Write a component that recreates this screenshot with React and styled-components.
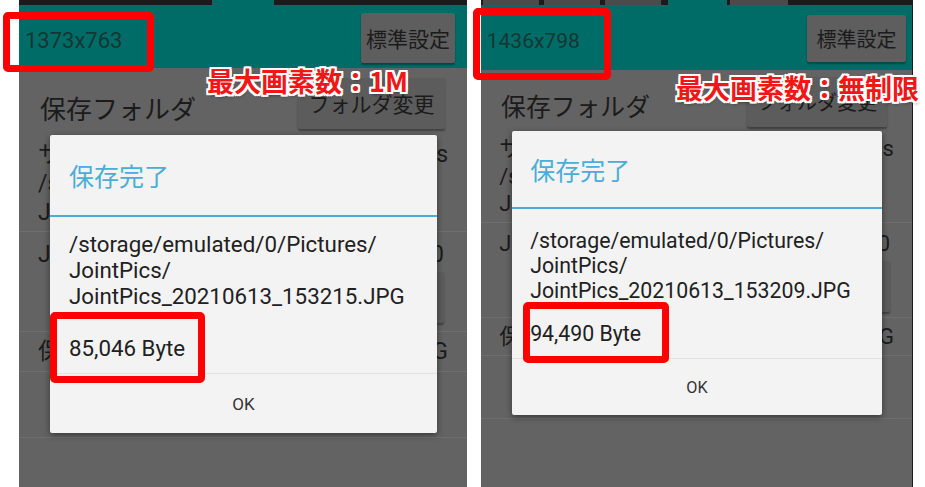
import React from 'react';
import styled, { createGlobalStyle, ThemeProvider } from 'styled-components';

// scale helper: right screenshot is captured a little smaller than the left one
const u = (n) => ({ theme }) => `${(n * theme.k).toFixed(2)}px`;

const PANELS = [
  {
    k: 1,
    w: 448,
    edge: false,
    headH: 63,
    folderH: 70,
    tools: [
      { w: 193, pad: 0, keys: [] },
      { w: 193, pad: 0, keys: [] },
    ],
    std: { w: 94, h: 50, right: 12 },
    folderBtn: { w: 147, h: 51, right: 22 },
    size: '1373x763',
    dialog: { top: 135, left: 31, w: 387, h: 298 },
    msgTop: 14,
    blank: 26,
    file: 'JointPics_20210613_153215.JPG',
    bytes: '85,046 Byte',
  },
  {
    k: 0.955,
    w: 432,
    edge: true,
    headH: 65,
    folderH: 63,
    tools: [
      { w: 187, pad: 2, keys: [56, 56, 56] },
      { w: 185, pad: 3, keys: [58] },
    ],
    std: { w: 99, h: 47, right: 6 },
    folderBtn: { w: 140, h: 50, right: 25 },
    size: '1436x798',
    dialog: { top: 131, left: 31, w: 370, h: 284 },
    msgTop: 20,
    blank: 18,
    file: 'JointPics_20210613_153209.JPG',
    bytes: '94,490 Byte',
  },
];

const MARKS = [
  { x: 3, y: 12, w: 151, h: 60 },
  { x: 50, y: 312, w: 155, h: 71 },
  { x: 473, y: 8, w: 138, h: 72 },
  { x: 523, y: 302, w: 146, h: 61 },
];

const NOTES = [
  { x: 207, y: 64, text: '最大画素数：1M' },
  { x: 676, y: 71, text: '最大画素数：無制限' },
];

export default function App() {
  return (
    <>
      <GlobalStyle />
      <Stage>
        {PANELS.map((p) => (
          <ThemeProvider theme={p} key={p.size}>
            <Phone p={p} />
          </ThemeProvider>
        ))}
        {MARKS.map((m, i) => (
          <RedBox key={i} $x={m.x} $y={m.y} $w={m.w} $h={m.h} />
        ))}
        {NOTES.map((n) => (
          <RedNote key={n.text} $x={n.x} $y={n.y}>
            {n.text}
          </RedNote>
        ))}
      </Stage>
    </>
  );
}

function Phone({ p }) {
  return (
    <Screen $w={p.w} $edge={p.edge}>
      <Toolbar>
        {p.tools.map((t, i) => (
          <ToolGroup key={i} $w={t.w} $pad={t.pad}>
            {t.keys.map((kw, j) => (
              <ToolKey key={j} $w={kw} />
            ))}
          </ToolGroup>
        ))}
      </Toolbar>

      <Header $h={p.headH} $right={p.std.right}>
        <SizeLabel>{p.size}</SizeLabel>
        <StdButton $w={p.std.w} $h={p.std.h}>標準設定</StdButton>
      </Header>

      <FolderRow $h={p.folderH} $right={p.folderBtn.right}>
        <FolderLabel>保存フォルダ</FolderLabel>
        <GrayButton $w={p.folderBtn.w} $h={p.folderBtn.h}>
          フォルダ変更
        </GrayButton>
      </FolderRow>

      <InfoRow>
        <Line>
          <span>サブフォルダ</span>
          <span>JointPics</span>
        </Line>
        <Line>/storage/emulated/0/Pictures/</Line>
        <Line>JointPics</Line>
      </InfoRow>

      <QualityRow>
        <Line>
          <span>JPEG品質</span>
          <span>100</span>
        </Line>
        <GrayButton $w={120} $h={51} $right>
          変更
        </GrayButton>
      </QualityRow>

      <FormatRow>
        <Line>
          <span>保存形式</span>
          <span>JPG</span>
        </Line>
      </FormatRow>

      <EmptyRow />

      <Dialog $top={p.dialog.top} $left={p.dialog.left} $w={p.dialog.w} $h={p.dialog.h}>
        <DialogTitle>保存完了</DialogTitle>
        <TitleRule />
        <Message $top={p.msgTop}>
          <MsgLine>/storage/emulated/0/Pictures/</MsgLine>
          <MsgLine>JointPics/</MsgLine>
          <MsgLine>{p.file}</MsgLine>
          <BlankLine $h={p.blank} />
          <MsgLine>{p.bytes}</MsgLine>
        </Message>
        <Actions>
          <OkButton>OK</OkButton>
        </Actions>
      </Dialog>
    </Screen>
  );
}

const GlobalStyle = createGlobalStyle`
  html, body {
    margin: 0;
    padding: 0;
    background: #fff;
  }
  body {
    font-family: Roboto, "Noto Sans CJK JP", sans-serif;
  }
`;

const Stage = styled.div`
  position: relative;
  width: 925px;
  height: 487px;
  overflow: hidden;
  box-sizing: border-box;
  padding-left: 19px;
  display: flex;
  gap: 14px;
  background: #fff;
`;

const Screen = styled.div`
  position: relative;
  flex-shrink: 0;
  width: ${(p) => p.$w}px;
  height: 487px;
  box-sizing: border-box;
  background: #636363;
  border-right: ${(p) => (p.$edge ? '1px solid #1c1c1c' : 'none')};
  overflow: hidden;
  color: #1b1b1b;
`;

const Toolbar = styled.div`
  display: flex;
  justify-content: space-between;
  height: 5px;
  background: #006c67;
`;

const ToolGroup = styled.div`
  width: ${(p) => p.$w}px;
  box-sizing: border-box;
  padding: 0 ${(p) => p.$pad}px;
  display: flex;
  gap: 5px;
  background: #1b1b1b;
`;

const ToolKey = styled.div`
  width: ${(p) => p.$w}px;
  background: #4b4b4b;
`;

const Header = styled.div`
  height: ${(p) => p.$h}px;
  box-sizing: border-box;
  padding: 0 ${(p) => p.$right}px 0 ${u(6)};
  display: flex;
  align-items: center;
  justify-content: space-between;
  background: #006c67;
`;

const SizeLabel = styled.div`
  font-size: ${u(22)};
  padding-top: ${u(8)};
  color: #143734;
`;

const GrayButton = styled.div`
  width: ${(p) => p.$w}px;
  height: ${(p) => p.$h}px;
  display: flex;
  align-items: center;
  justify-content: center;
  align-self: ${(p) => (p.$right ? 'flex-end' : 'auto')};
  background: #5c5c5c;
  border-radius: 2px;
  box-shadow: 0 2px 2px rgba(0, 0, 0, 0.35);
  font-size: ${u(21)};
  color: #1b1b1b;
  white-space: nowrap;
`;

const StdButton = styled(GrayButton)`
  background: #5e5e5e;
  margin-top: ${u(2)};
`;

const FolderRow = styled.div`
  height: ${(p) => p.$h}px;
  box-sizing: border-box;
  padding: 0 ${(p) => p.$right}px 0 ${u(21)};
  display: flex;
  align-items: center;
  justify-content: space-between;
`;

const FolderLabel = styled.div`
  font-size: ${u(26)};
  padding-top: ${u(8)};
`;

const Row = styled.div`
  display: flex;
  flex-direction: column;
  box-sizing: border-box;
  padding-left: ${u(19)};
  padding-right: ${u(19)};
  border-bottom: 1px solid #6e6e6e;
`;

const InfoRow = styled(Row)`
  height: ${u(94)};
  padding-top: ${u(2)};
`;

const QualityRow = styled(Row)`
  height: ${u(100)};
  padding-top: ${u(8)};
  padding-right: ${u(23)};
  gap: ${u(3)};
`;

const FormatRow = styled(Row)`
  height: ${u(40)};
  justify-content: center;
`;

const EmptyRow = styled(Row)`
  height: ${u(66)};
`;

const Line = styled.div`
  display: flex;
  justify-content: space-between;
  font-size: ${u(23)};
  line-height: ${u(29)};
  white-space: nowrap;
`;

const Dialog = styled.div`
  position: absolute;
  top: ${(p) => p.$top}px;
  left: ${(p) => p.$left}px;
  width: ${(p) => p.$w}px;
  height: ${(p) => p.$h}px;
  display: flex;
  flex-direction: column;
  background: #f4f3f3;
  border-radius: 2px;
  box-shadow: 0 2px 6px rgba(0, 0, 0, 0.45);
`;

const DialogTitle = styled.div`
  height: ${u(80)};
  display: flex;
  align-items: center;
  padding-left: ${u(19)};
  font-size: 25px;
  color: #4aaed7;
`;

const TitleRule = styled.div`
  height: 2px;
  background: #4aaed7;
`;

const Message = styled.div`
  padding: ${(p) => p.$top}px ${u(19)} ${u(12)};
  border-bottom: 1px solid #e2e1e1;
  color: #212121;
`;

const MsgLine = styled.div`
  font-size: ${u(22.3)};
  line-height: ${u(26)};
  white-space: nowrap;
`;

const BlankLine = styled.div`
  height: ${(p) => p.$h}px;
`;

const Actions = styled.div`
  flex: 1;
  display: flex;
  align-items: center;
  justify-content: center;
`;

const OkButton = styled.div`
  font-size: ${u(17)};
  color: #333;
`;

const RedBox = styled.div`
  position: absolute;
  left: ${(p) => p.$x}px;
  top: ${(p) => p.$y}px;
  width: ${(p) => p.$w}px;
  height: ${(p) => p.$h}px;
  box-sizing: border-box;
  border: 7px solid #ff0000;
  border-radius: 5px;
`;

const RedNote = styled.div`
  position: absolute;
  left: ${(p) => p.$x}px;
  top: ${(p) => p.$y}px;
  font-family: "Noto Sans CJK JP", sans-serif;
  font-weight: 700;
  font-size: 27px;
  line-height: 34px;
  color: #f21616;
  white-space: nowrap;
  text-shadow:
    2px 0 0 #fff, -2px 0 0 #fff, 0 2px 0 #fff, 0 -2px 0 #fff,
    2px 2px 0 #fff, -2px -2px 0 #fff, 2px -2px 0 #fff, -2px 2px 0 #fff,
    1px 3px 3px rgba(0, 0, 0, 0.35);
`;
